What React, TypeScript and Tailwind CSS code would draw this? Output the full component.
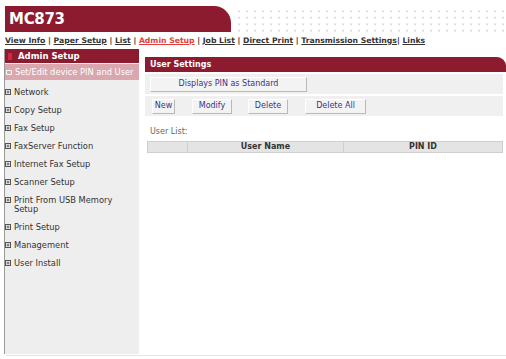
import React from "react";

const RED = "bg-[#8c1b30]";

function PlusBox() {
  return (
    <svg width="6" height="6" viewBox="0 0 6 6" className="shrink-0">
      <rect x="0.5" y="0.5" width="5" height="5" fill="none" stroke="#555" strokeWidth="1" />
      <path d="M1.5 3H4.5M3 1.5V4.5" stroke="#555" strokeWidth="0.9" />
    </svg>
  );
}

function Btn({ label, w }: { label: string; w: string }) {
  return (
    <div
      className={`${w} h-[15px] flex items-center justify-center bg-[#f3f3f3] border border-t-[#ffffff] border-l-[#ffffff] border-r-[#b9b9b9] border-b-[#b9b9b9] text-[8px] text-[#35358c]`}
    >
      {label}
    </div>
  );
}

export default function App() {
  const nav: { t: string; active?: boolean; sep?: string }[] = [
    { t: "View Info", sep: " | " },
    { t: "Paper Setup", sep: " | " },
    { t: "List", sep: " | " },
    { t: "Admin Setup", active: true, sep: " | " },
    { t: "Job List", sep: " | " },
    { t: "Direct Print", sep: " | " },
    { t: "Transmission Settings", sep: "| " },
    { t: "Links" },
  ];
  const items = [
    "Network",
    "Copy Setup",
    "Fax Setup",
    "FaxServer Function",
    "Internet Fax Setup",
    "Scanner Setup",
    "Print From USB Memory Setup",
    "Print Setup",
    "Management",
    "User Install",
  ];
  return (
    <div className="w-[506px] h-[359px] bg-white overflow-hidden flex flex-col font-['DejaVu_Sans',sans-serif] text-[#333]">
      {/* header */}
      <div className="flex pt-[6px] pl-[5px] h-[32px] shrink-0">
        <div className={`${RED} w-[226px] h-[26px] rounded-tr-[17px] flex items-center pl-[4px]`}>
          <span className="text-white font-bold text-[15px] leading-none tracking-[-0.3px]">MC873</span>
        </div>
        <div className="flex-1 ml-[4px] mt-[2px] h-[24px] bg-[radial-gradient(circle,#d8d8d8_0.8px,transparent_1.2px)] bg-[size:8px_6.5px]" />
      </div>
      {/* nav */}
      <div className="h-[17px] shrink-0 pl-[5px] flex items-center text-[7.7px] font-bold whitespace-pre">
        {nav.map((n) => (
          <React.Fragment key={n.t}>
            <span className={`underline ${n.active ? "text-[#e0403c]" : "text-[#333]"}`}>{n.t}</span>
            {n.sep && <span>{n.sep}</span>}
          </React.Fragment>
        ))}
      </div>
      {/* body */}
      <div className="flex flex-1 min-h-0">
        <div className="ml-[4px] w-[135px] h-[305px] bg-[#eeeeee] border-l border-[#9a9a9a] flex flex-col">
          <div className={`${RED} h-[14px] flex items-center`}>
            <div className="w-[4px] h-[7px] bg-[#d0283c] ml-[3px]" />
            <span className="ml-[6px] text-white font-bold text-[8.5px]">Admin Setup</span>
          </div>
          <div className="mt-[1px] h-[16px] bg-[#d9a7ad] flex items-center pl-[1px] gap-[3px]">
            <div className="w-[6px] h-[5px] border border-white rounded-[1px]" />
            <span className="text-white text-[8.3px] whitespace-nowrap">Set/Edit device PIN and User</span>
          </div>
          <div className="pt-[3px] flex flex-col">
            {items.map((it) => (
              <div key={it} className="flex items-start gap-[3px] py-[4.5px] text-[8.3px] leading-[9px]">
                <div className="mt-[1.5px]"><PlusBox /></div>
                <span className="w-[118px]">{it}</span>
              </div>
            ))}
          </div>
        </div>
        <div className="flex-1 pl-[6px] pt-[8px]">
          <div className={`${RED} h-[15px] rounded-tr-[9px] flex items-center pl-[5px]`}>
            <span className="text-white font-bold text-[8px]">User Settings</span>
          </div>
          <div className="mr-[3px] mt-[2px] h-[20px] bg-[#f0f0f0] flex items-center pl-[5px]">
            <Btn label="Displays PIN as Standard" w="w-[157px]" />
          </div>
          <div className="mr-[3px] mt-[2px] h-[20px] bg-[#f0f0f0] flex items-center pl-[7px]">
            <Btn label="New" w="w-[23px]" />
            <div className="w-[17px]" />
            <Btn label="Modify" w="w-[40px]" />
            <div className="w-[16px]" />
            <Btn label="Delete" w="w-[40px]" />
            <div className="w-[17px]" />
            <Btn label="Delete All" w="w-[61px]" />
          </div>
          <div className="pl-[5px] mt-[10px] text-[8px] text-[#666]">User List:</div>
          <div className="mt-[3px] ml-[2px] mr-[3px] h-[12px] flex bg-[#e4e4e4] border border-[#cfcfcf] text-[8px] font-bold text-[#333]">
            <div className="w-[40px] border-r border-[#cfcfcf]" />
            <div className="w-[156px] border-r border-[#cfcfcf] flex items-center justify-center">User Name</div>
            <div className="flex-1 flex items-center justify-center">PIN ID</div>
          </div>
        </div>
      </div>
      <div className="h-[1px] ml-[6px] bg-[#e4e4e4] mb-[3px] shrink-0" />
    </div>
  );
}
